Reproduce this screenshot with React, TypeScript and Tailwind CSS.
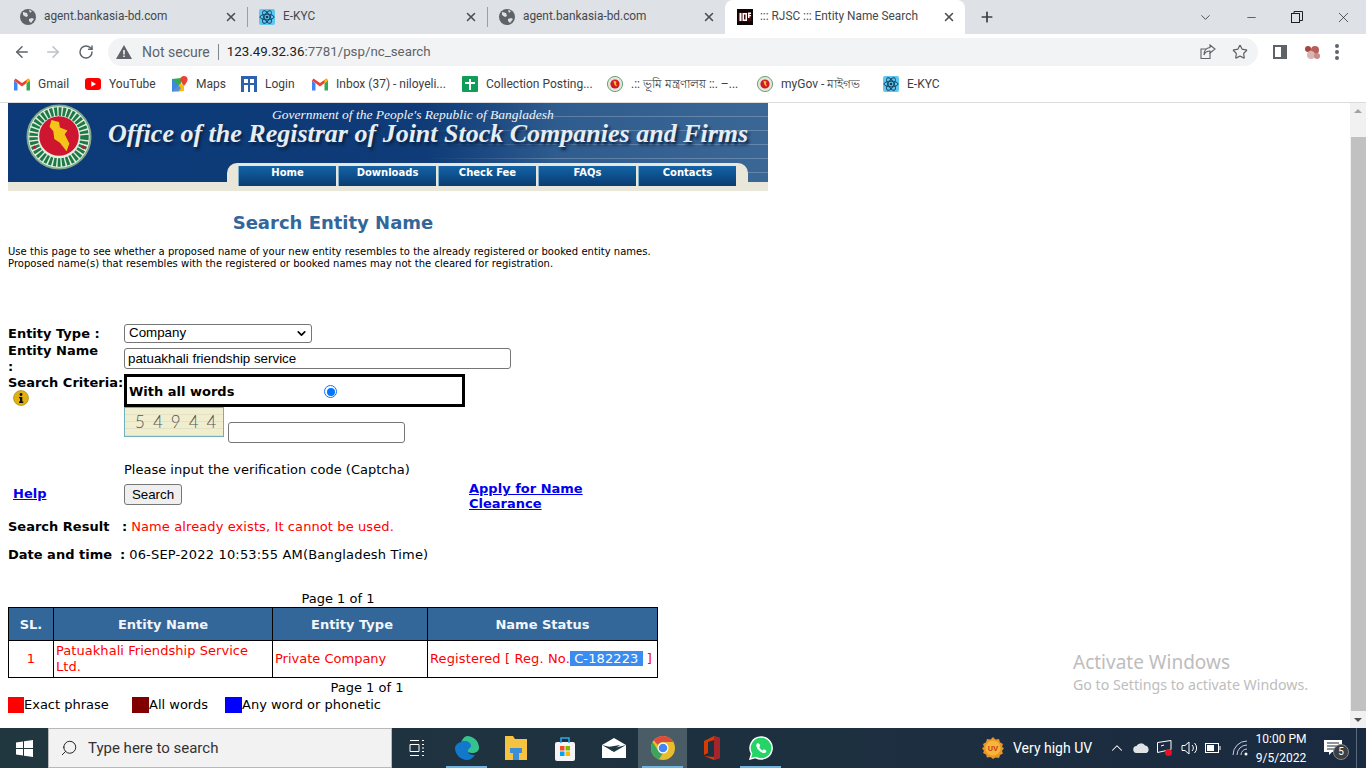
import React from "react";
import { ArrowLeft, ArrowRight, RotateCw, Star, X, Plus, ChevronDown, Minus, Search, ChevronUp } from "lucide-react";

const ui = { fontFamily: 'Roboto, "Noto Sans", sans-serif' };
const noto = { fontFamily: '"Noto Sans", "Open Sans", sans-serif' };
const verdana = { fontFamily: '"DejaVu Sans", Verdana, sans-serif' };
const arial = { fontFamily: '"Liberation Sans", Arial, sans-serif' };

function Globe() {
  return (
    <svg width="16" height="16" viewBox="0 0 16 16" className="shrink-0">
      <circle cx="8" cy="8" r="8" fill="#5f6368" />
      <path d="M3 3l4 1 1 3-2 1-3-2zM9 10l3-1 2 1-3 4-2-2zM9 1l3 1-2 2z" fill="#dee1e6" />
    </svg>
  );
}
function Atom({ s = 16 }: { s?: number }) {
  return (
    <svg width={s} height={s} viewBox="0 0 16 16" className="shrink-0">
      <rect width="16" height="16" rx="2" fill="#5cc8ee" />
      <g fill="none" stroke="#123a5c" strokeWidth="0.9">
        <ellipse cx="8" cy="8" rx="7" ry="2.8" />
        <ellipse cx="8" cy="8" rx="7" ry="2.8" transform="rotate(60 8 8)" />
        <ellipse cx="8" cy="8" rx="7" ry="2.8" transform="rotate(120 8 8)" />
      </g>
      <circle cx="8" cy="8" r="1.3" fill="#123a5c" />
    </svg>
  );
}
function Gmail() {
  return (
    <svg width="16" height="13" viewBox="0 0 16 12" className="shrink-0">
      <path d="M0 2v10h3.500V5z" fill="#4285f4" />
      <path d="M16 2v10h-3.500V5z" fill="#34a853" />
      <path d="M0 2l8 6 8-6-1.500-2L8 4.500 1.500 0z" fill="#ea4335" />
      <path d="M12.500 5V1.500L14.500 0 16 2z" fill="#fbbc04" />
    </svg>
  );
}
function Youtube() {
  return (
    <svg width="16" height="12" viewBox="0 0 16 12" className="shrink-0">
      <rect width="16" height="12" rx="3" fill="#f00" />
      <path d="M6.300 3.200v5.600L11 6z" fill="#fff" />
    </svg>
  );
}
function Maps() {
  return (
    <svg width="16" height="16" viewBox="0 0 16 16" className="shrink-0">
      <path d="M0 3l9-1v13l-9 1z" fill="#34a853" />
      <path d="M0 16L9 7l3 3v5z" fill="#fbbc04" />
      <path d="M0 3l9 9-2 3H0z" fill="#4285f4" opacity="0.85" />
      <path d="M12 0a3.600 3.600 0 0 1 3.600 3.600C15.600 6 12 10 12 10S8.400 6 8.400 3.600A3.600 3.600 0 0 1 12 0z" fill="#ea4335" />
    </svg>
  );
}
function GridIcon() {
  return (
    <svg width="16" height="16" viewBox="0 0 16 16" className="shrink-0">
      <rect width="16" height="16" fill="#2e62b0" />
      <path d="M3 3h4v4H3zM9 3h4v4H9zM3 9h4v7H3zM9 9h4v7H9z" fill="#fff" />
    </svg>
  );
}
function GreenCross() {
  return (
    <svg width="16" height="16" viewBox="0 0 16 16" className="shrink-0">
      <rect width="16" height="16" rx="1" fill="#0f9d58" />
      <path d="M7 3h2v3h4v2H9v6H7V8H3V6h4z" fill="#fff" />
    </svg>
  );
}
function Emblem({ s = 16 }: { s?: number }) {
  return (
    <svg width={s} height={s} viewBox="0 0 16 16" className="shrink-0">
      <circle cx="8" cy="8" r="7.600" fill="#dfe8d8" stroke="#4d8a5c" strokeWidth="0.8" />
      <circle cx="8" cy="8" r="4.600" fill="#d4152c" />
      <path d="M6.500 4.500l3 1-.5 2 1 3-2-1-1-2z" fill="#f6c21c" />
    </svg>
  );
}
function TenLogo() {
  return (
    <svg width="16" height="16" viewBox="0 0 16 16" className="shrink-0">
      <rect width="16" height="16" fill="#0a0505" />
      <rect x="1.500" y="3.500" width="13" height="9" fill="#7a1010" opacity="0.55" />
      <path d="M2.500 4h2v8h-2zM5.500 4h4.500v8H5.500zM7 5.500v5h1.500v-5zM11 3.500h3V5h-1.500v1H14v1.300h-1.500V9H11z" fill="#fff" />
    </svg>
  );
}

function Tab({ icon, title, active, cls }: { icon: React.ReactNode; title: string; active?: boolean; cls: string }) {
  return (
    <div className={`${cls} h-[34px] flex items-center pr-[9px] text-[11.850px] shrink-0 text-[#45494d] ${active ? "bg-white rounded-t-lg" : ""}`}>
      {icon}
      <span className={active ? "ml-[7px] flex-1 truncate" : "ml-[8px] flex-1 truncate"}>{title}</span>
      <X size={14} strokeWidth={2.6} className="text-[#4a4d51] shrink-0" />
    </div>
  );
}
const Sep = () => <div className="w-px h-[20px] bg-[#9aa0a6] shrink-0" />;

function Bookmark({ icon, label, w }: { icon: React.ReactNode; label: React.ReactNode; w: string }) {
  return (
    <div className={`${w} flex items-center gap-[8px] shrink-0 text-[12px] text-[#3c4043]`}>
      {icon}
      <span className="truncate">{label}</span>
    </div>
  );
}

function WinBtn({ children }: { children: React.ReactNode }) {
  return <div className="w-[46px] flex justify-center">{children}</div>;
}

function Chrome() {
  return (
    <div style={ui} className="shrink-0">
      <div className="h-[34px] bg-[#dee1e6] flex items-center pl-[5px]">
        <Tab cls="w-[242px] pl-[15px]" icon={<Globe />} title="agent.bankasia-bd.com" />
        <Sep />
        <Tab cls="w-[239px] pl-[11px]" icon={<Atom />} title="E-KYC" />
        <Sep />
        <Tab cls="w-[237px] pl-[11px]" icon={<Globe />} title="agent.bankasia-bd.com" />
        <Tab cls="w-[240px] pl-[12px]" active icon={<TenLogo />} title="::: RJSC ::: Entity Name Search" />
        <Plus size={16} strokeWidth={2.6} className="ml-[14px] text-[#3c4043]" />
        <div className="ml-auto flex items-center text-[#1f1f1f]">
          <WinBtn><ChevronDown size={15} strokeWidth={1.2} /></WinBtn>
          <WinBtn><Minus size={13} strokeWidth={1.2} /></WinBtn>
          <WinBtn>
            <svg width="12" height="12" viewBox="0 0 12 12" fill="none" stroke="#1f1f1f"><rect x="0.500" y="2.500" width="8" height="9" /><path d="M3 2.500V.5h8.500v9H8.500" /></svg>
          </WinBtn>
          <WinBtn><X size={17} strokeWidth={1} /></WinBtn>
        </div>
      </div>
      <div className="h-[34px] bg-white flex items-center pl-[13px] pt-[2px]">
        <ArrowLeft size={18} strokeWidth={2} className="text-[#5f6368]" />
        <ArrowRight size={18} strokeWidth={2} className="ml-[13px] text-[#bdc1c6]" />
        <RotateCw size={16} strokeWidth={2.2} className="ml-[16px] text-[#5f6368]" />
        <div className="ml-[14px] w-[1150px] h-[28px] rounded-full bg-[#f1f3f4] flex items-center pl-[8px] text-[14px] text-[#5f6368]">
          <svg width="16" height="14" viewBox="0 0 16 14" className="shrink-0"><path d="M8 0l8 14H0zM7.200 5v4.500h1.600V5zM7.200 10.500v1.600h1.600v-1.600z" fill="#5f6368" fillRule="evenodd" /></svg>
          <span className="ml-[10px]">Not secure</span>
          <div className="w-px h-[16px] bg-[#80868b] ml-[8px] mr-[8px]" />
          <span className="text-[13.300px]"><span className="text-[#202124]">123.49.32.36</span>:7781/psp/nc_search</span>
          <svg width="16" height="16" viewBox="0 0 16 16" className="ml-auto" fill="none" stroke="#5f6368" strokeWidth="1.100"><path d="M10 8.500V14.500H1V5h5" /><path d="M10 1l5 4-5 4V7C7 7 5 8 4 11c0-4 2-7 6-7.500z" /></svg>
          <Star size={16} strokeWidth={1.8} className="ml-[16px] mr-[10px] text-[#5f6368]" />
        </div>
        <svg width="14" height="14" viewBox="0 0 14 14" className="ml-[15px]"><path d="M0 0h14v14H0zM2 2v10h6V2z" fill="#5f6368" fillRule="evenodd" /></svg>
        <svg width="18" height="16" viewBox="0 0 18 16" className="ml-[16px]">
          <circle cx="5" cy="5" r="3" fill="#a94442" /><circle cx="12" cy="6" r="4" fill="#b85c5c" /><circle cx="8" cy="11" r="4" fill="#d7b5b2" /><circle cx="14" cy="12" r="3" fill="#c58c88" />
        </svg>
        <div className="ml-[14px] w-[4px] flex flex-col gap-[2.500px]">
          <span className="w-[3.500px] h-[3.500px] rounded-full bg-[#5f6368]" />
          <span className="w-[3.500px] h-[3.500px] rounded-full bg-[#5f6368]" />
          <span className="w-[3.500px] h-[3.500px] rounded-full bg-[#5f6368]" />
        </div>
      </div>
      <div className="h-[35px] bg-white border-b border-[#dadce0] flex items-center pl-[14px] pb-[2px]">
        <Bookmark w="w-[71px]" icon={<Gmail />} label="Gmail" />
        <Bookmark w="w-[87px]" icon={<Youtube />} label="YouTube" />
        <Bookmark w="w-[69px]" icon={<Maps />} label="Maps" />
        <Bookmark w="w-[71px]" icon={<GridIcon />} label="Login" />
        <Bookmark w="w-[150px]" icon={<Gmail />} label="Inbox (37) - niloyeli..." />
        <Bookmark w="w-[145px]" icon={<GreenCross />} label="Collection Posting..." />
        <Bookmark w="w-[150px]" icon={<Emblem />} label=".:: ভূমি মন্ত্রণালয় ::. –..." />
        <Bookmark w="w-[126px]" icon={<Emblem />} label="myGov - মাইগভ" />
        <Bookmark w="w-[80px]" icon={<Atom />} label="E-KYC" />
      </div>
    </div>
  );
}

function Banner() {
  const nav = ["Home", "Downloads", "Check Fee", "FAQs", "Contacts"];
  return (
    <div className="w-[760px] h-[88px] bg-[#e9e7da] shrink-0">
      <div className="h-[79px] flex overflow-hidden bg-[linear-gradient(90deg,#0c3a78_0%,#0f3c78_55%,rgba(15,60,120,0)_72%),repeating-linear-gradient(180deg,rgba(255,255,255,0)_0px,rgba(255,255,255,0)_13px,rgba(255,255,255,0.22)_13px,rgba(255,255,255,0.22)_14px),linear-gradient(90deg,#12407c,#3a6795)]">
        <svg width="66" height="66" viewBox="0 0 70 70" className="ml-[18px] mt-[1px] shrink-0">
          <circle cx="35" cy="35" r="33.500" fill="#e4eee0" stroke="#7fa98a" strokeWidth="2" />
          <circle cx="35" cy="35" r="27" fill="none" stroke="#1d7a46" strokeWidth="9" strokeDasharray="3 1.500" />
          <circle cx="35" cy="34" r="21" fill="#cf1630" />
          <path d="M27 17l8 2 1 6 8 3-3 4 5 10-3 8-7-9-6-4-1-8-4-5z" fill="#f4c518" />
          <path d="M9 44l3 2-3 2-3-2zM61 44l3 2-3 2-3-2z" fill="#b32036" />
        </svg>
        <div className="flex flex-col" style={{ fontFamily: '"Liberation Serif", "Times New Roman", serif' }}>
          <div className="ml-[180px] mt-[4px] text-[13.500px] italic leading-[16px] text-[#eef3f8] whitespace-nowrap">Government of the People's Republic of Bangladesh</div>
          <div className="ml-[16px] text-[26px] italic font-bold leading-[22px] text-[#e6edf3] whitespace-nowrap [text-shadow:2px_3px_3px_#0a2245]">Office of the Registrar of Joint Stock Companies and Firms</div>
        </div>
      </div>
      <div className="ml-[219px] -mt-[19px] w-[521px] h-[28px] bg-[#e9e7da] rounded-t-[10px] flex pl-[11px] pt-[3px] gap-[2px] relative">
        {nav.map((n) => (
          <div key={n} style={verdana} className="w-[98px] h-[20px] bg-gradient-to-b from-[#1264a8] to-[#0a3c70] border-l border-[#7fb0d0] text-white text-[10px] font-bold text-center leading-[13px]">{n}</div>
        ))}
      </div>
    </div>
  );
}

function Captcha() {
  return (
    <div className="w-[100px] h-[30px] border border-[#6fb0bd] bg-[repeating-linear-gradient(180deg,#f0eecf_0px,#f0eecf_6px,#d5d5b8_7px)] flex items-center pl-[10px] gap-[8px] text-[#555] text-[17px] font-light shrink-0" style={{ fontFamily: 'Lato, sans-serif' }}>
      <span>5</span><span>4</span><span>9</span><span>4</span><span>4</span>
    </div>
  );
}

function Form() {
  return (
    <div className="text-[13px] text-black" style={verdana}>
      <div className="flex h-[22px] items-center">
        <div className="w-[116px] font-bold pt-[2px]">Entity Type :</div>
        <div className="w-[188px] h-[19px] border border-[#767676] rounded-[3px] bg-white flex items-center pl-[4px] pr-[3px] justify-between text-[13.330px]" style={arial}>
          <span>Company</span>
          <ChevronDown size={13} strokeWidth={3} />
        </div>
      </div>
      <div className="flex h-[30px]">
        <div className="w-[116px] font-bold leading-[16px] -mt-[1px]">Entity Name<br />:</div>
        <div className="w-[387px] h-[21px] mt-[4px] border border-[#767676] rounded-[3px] bg-white flex items-center pl-[3px] text-[13.330px]" style={arial}>patuakhali friendship service</div>
      </div>
      <div className="flex h-[33px]">
        <div className="w-[116px] font-bold leading-[16px] whitespace-nowrap pt-[1px]">
          Search Criteria:
          <svg width="16" height="16" viewBox="0 0 16 16" className="ml-[5px] -mt-[1px]">
            <circle cx="8" cy="8" r="7.500" fill="#e0b010" stroke="#9a7a00" strokeWidth="0.600" />
            <circle cx="8" cy="4.500" r="1.400" fill="#111" />
            <path d="M6 7h3.300v4.500h1V13H6v-1.500h1V8.300H6z" fill="#111" />
          </svg>
        </div>
        <div className="w-[341px] h-[33px] border-[3px] border-black flex items-center pl-[2px] font-bold">
          <span className="w-[195px] pt-[2px]">With all words</span>
          <span className="w-[13px] h-[13px] mt-[2px] rounded-full border border-[#0075ff] flex items-center justify-center bg-white">
            <span className="w-[8px] h-[8px] rounded-full bg-[#0075ff]" />
          </span>
        </div>
      </div>
      <div className="flex ml-[116px] h-[36px] gap-[4px]">
        <Captcha />
        <div className="w-[177px] h-[21px] mt-[15px] border border-[#767676] rounded-[3px] bg-white" />
      </div>
      <div className="ml-[116px] mt-[18px] leading-[18px]">Please input the verification code (Captcha)</div>
      <div className="flex h-[22px] mt-[5px]">
        <a className="ml-[5px] w-[111px] font-bold text-[#0000ee] underline leading-[20px]">Help</a>
        <div className="w-[58px] h-[21px] border border-[#767676] rounded-[3px] bg-[#efefef] flex items-center justify-center text-[13.330px]" style={arial}>Search</div>
        <a className="ml-[287px] w-[130px] font-bold text-[#0000ee] underline leading-[15px] mt-[-3px]">Apply for Name Clearance</a>
      </div>
      <div className="flex items-center h-[18px] mt-[11px] pt-[2px]">
        <div className="w-[114px] font-bold whitespace-nowrap">Search Result</div>
        <span className="font-bold mr-[4px]">:</span>
        <span className="text-[#f00] tracking-[0.100px]">Name already exists, It cannot be used.</span>
      </div>
      <div className="flex items-center h-[18px] mt-[10px] pt-[2px]">
        <div className="w-[112px] font-bold whitespace-nowrap">Date and time</div>
        <span className="font-bold mr-[4px]">:</span>
        <span className="tracking-[0.175px]">06-SEP-2022 10:53:55 AM(Bangladesh Time)</span>
      </div>
    </div>
  );
}

function ResultTable() {
  return (
    <div style={verdana} className="w-[650px] text-[13px]">
      <div className="text-center leading-[16px] ml-[10px] mt-[28px]">Page 1 of 1</div>
      <table className="w-[650px] border-collapse table-fixed">
        <thead>
          <tr className="h-[33px] bg-[#336699] text-[#f2f6fa] font-bold">
            <th className="w-[45px] border border-black pt-[2px]">SL.</th>
            <th className="w-[219px] border border-black pt-[2px]">Entity Name</th>
            <th className="w-[155px] border border-black pl-[4px] pt-[2px]">Entity Type</th>
            <th className="border border-black pt-[2px]">Name Status</th>
          </tr>
        </thead>
        <tbody>
          <tr className="h-[37px] text-[#f00] leading-[16px]">
            <td className="border border-black text-center">1</td>
            <td className="border border-black pl-[2px] tracking-[0.050px]">Patuakhali Friendship Service Ltd.</td>
            <td className="border border-black pl-[2px]">Private Company</td>
            <td className="border border-black pl-[2px] whitespace-nowrap tracking-[0.120px]">Registered [ Reg. No.<span className="bg-[#3b8cf0] text-white">&nbsp;C-182223&nbsp;</span><span className="ml-[4px]">]</span></td>
          </tr>
        </tbody>
      </table>
      <div className="text-center leading-[16px] ml-[68px] mt-[2px]">Page 1 of 1</div>
      <div className="flex items-center h-[17px]">
        <span className="w-[16px] h-[16px] bg-[#f00]" />
        <span className="w-[108px]">Exact phrase</span>
        <span className="w-[17px] h-[16px] bg-[#800000]" />
        <span className="w-[76px]">All words</span>
        <span className="w-[17px] h-[16px] bg-[#0000ff]" />
        <span>Any word or phonetic</span>
      </div>
    </div>
  );
}

function Scrollbar() {
  return (
    <div className="w-[16px] bg-[#f1f1f1] flex flex-col items-center shrink-0">
      <div className="h-[17px] flex items-center justify-center">
        <span className="border-x-[4px] border-x-transparent border-b-[4px] border-b-[#a3a3a3]" />
      </div>
      <div className="w-[15px] mt-[17px] h-[575px] bg-[#c1c1c1]" />
      <div className="mt-auto h-[17px] flex items-center justify-center">
        <span className="border-x-[4px] border-x-transparent border-t-[4px] border-t-[#505050]" />
      </div>
    </div>
  );
}

function Page() {
  return (
    <div className="h-[625px] flex bg-white relative shrink-0">
      <div className="flex-1 pl-[8px] overflow-hidden">
        <Banner />
        <h1 style={verdana} className="w-[650px] text-center text-[18px] font-bold text-[#336699] mt-[20px] leading-[23px]">Search Entity Name</h1>
        <p style={verdana} className="text-[10px] leading-[12px] mt-[12px] h-[76px] text-black w-[660px] tracking-[0.030px]">
          Use this page to see whether a proposed name of your new entity resembles to the already registered or booked entity names.<br />
          Proposed name(s) that resembles with the registered or booked names may not the cleared for registration.
        </p>
        <Form />
        <ResultTable />
      </div>
      <Scrollbar />
      <div className="absolute left-[1073px] top-[547px] text-[#bdbdbd]" style={noto}>
        <div className="text-[19px] leading-[24px]">Activate Windows</div>
        <div className="text-[14.200px] leading-[20px] pt-[1px]">Go to Settings to activate Windows.</div>
      </div>
    </div>
  );
}

function TaskIcon({ children, active, underline }: { children: React.ReactNode; active?: boolean; underline?: boolean }) {
  return (
    <div className={`w-[49px] h-[40px] flex items-center justify-center relative shrink-0 ${active ? "bg-[#4a5c66]" : ""}`}>
      {children}
      {underline && <span className="absolute bottom-0 left-[4px] right-[4px] h-[2px] bg-[#6fb3e0]" />}
    </div>
  );
}
function TrayBox({ children }: { children: React.ReactNode }) {
  return <div className="w-[24px] flex justify-center shrink-0">{children}</div>;
}

function Taskbar() {
  return (
    <div style={ui} className="h-[40px] flex-1 flex items-center bg-gradient-to-r from-[#21373f] to-[#1a2a40] text-white">
      <div className="w-[48px] flex justify-center shrink-0">
        <svg width="17" height="17" viewBox="0 0 17 17" fill="#fff"><path d="M0 2.400l7-1v6.600H0zM8 1.300L17 0v8H8zM0 9h7v6.600l-7-1zM8 9h9v8l-9-1.300z" /></svg>
      </div>
      <div className="w-[344px] h-[40px] bg-[#f2f2f2] border border-[#b8b8b8] flex items-center pl-[11px] text-[#333] text-[15px] shrink-0">
        <Search size={18} strokeWidth={1.3} className="-scale-x-100 text-[#222]" />
        <span className="ml-[10px] pt-[1px]">Type here to search</span>
      </div>
      <div className="w-[50px] flex justify-center shrink-0">
        <svg width="16" height="16" viewBox="0 0 16 16" fill="none" stroke="#fff"><path d="M1 .5h9M1 15.500h9M1 4.500h9v7H1zM13 .5h2M13 4.500h2M13 8h2M13 11.500h2M13 15.500h2" /></svg>
      </div>
      <TaskIcon underline>
        <svg width="26" height="26" viewBox="0 0 26 26">
          <path d="M13 1a12 12 0 0 1 12 12c0 3-3 5-7 5-3 0-5-1-5-3s3-2 3-5c0-3-5-5-9-3C9 3 11 1 13 1z" fill="#35c28f" />
          <path d="M7 7c3-2 10-1 10 4 0 2-3 2-3 5s3 4 7 4c-2 3-5 5-8 5C7 25 1 20 1 13c0-2 2-5 6-6z" fill="#1178cc" />
        </svg>
      </TaskIcon>
      <TaskIcon>
        <svg width="22" height="26" viewBox="0 0 22 26"><path d="M0 1h8l2 3h12v21H0z" fill="#f5c242" /><path d="M8 16h6v9H8z" fill="#3a8fd8" /><path d="M5 13h12v5H5z" fill="#3a8fd8" /></svg>
      </TaskIcon>
      <TaskIcon>
        <svg width="24" height="25" viewBox="0 0 24 25"><rect x="2" y="6" width="20" height="19" rx="2" fill="#f4f4f4" /><path d="M8 7V2h8v5" fill="none" stroke="#2ea8e8" strokeWidth="1.500" /><path d="M7 10h4.500v4.500H7z" fill="#f25022" /><path d="M12.500 10H17v4.500h-4.500z" fill="#7fba00" /><path d="M7 15.500h4.500V20H7z" fill="#00a4ef" /><path d="M12.500 15.500H17V20h-4.500z" fill="#ffb900" /></svg>
      </TaskIcon>
      <TaskIcon>
        <svg width="24" height="20" viewBox="0 0 24 20"><path d="M0 7L12 0l12 7v13H0z" fill="#fff" /><path d="M0 7l12 7 12-7-12 3z" fill="#21373f" /><path d="M6 9l12-2-8 6z" fill="#21373f" /></svg>
      </TaskIcon>
      <TaskIcon active underline>
        <svg width="24" height="24" viewBox="0 0 24 24">
          <circle cx="12" cy="12" r="12" fill="#e8bc2f" />
          <path d="M12 0a12 12 0 0 1 10.400 6H12a6 6 0 0 0-5.200 3L2.800 4.500A12 12 0 0 1 12 0z" fill="#dd4b3e" />
          <path d="M1.600 6A12 12 0 0 0 8 23.300l4-6.300a6 6 0 0 1-5.200-3z" fill="#3ba55c" />
          <circle cx="12" cy="12" r="5.500" fill="#fff" /><circle cx="12" cy="12" r="4.300" fill="#4285f4" />
        </svg>
      </TaskIcon>
      <TaskIcon>
        <svg width="18" height="24" viewBox="0 0 18 24"><path d="M1 5l10-5 6 2v20l-6 2-10-4 10 1V4L5 6v11l-4 2z" fill="#d83b01" /><path d="M11 0l6 2v20l-6 2z" fill="#a4262c" /></svg>
      </TaskIcon>
      <TaskIcon underline>
        <svg width="24" height="24" viewBox="0 0 24 24"><path d="M12 1a11 11 0 0 0-9.400 16.600L1 23l5.600-1.500A11 11 0 1 0 12 1z" fill="#25d366" stroke="#fff" strokeWidth="1.500" /><path d="M8.500 7c-1 .8-1.500 2-1 3.500 1 3 3.500 5.500 6.500 6.500 1.500.3 2.800-.3 3.300-1.300l-.3-1.500-2.300-1-1 1.200c-1.500-.6-2.800-2-3.500-3.500l1-1L10.500 8z" fill="#fff" /></svg>
      </TaskIcon>
      <div className="ml-auto flex items-center">
        <svg width="22" height="22" viewBox="0 0 22 22" className="shrink-0">
          <path d="M11 0l2.500 2.500L17 2l1 3.200L21 7l-1 3 2 1-2 3 1 2.500-3 1.500-1 3-3.500-.5L11 22l-2.500-2-3.500.5-1-3-3-1.500L2 14l-2-3 2-1-1-3 3-1.800L5 2l3.500.5z" fill="#e8952a" />
          <circle cx="11" cy="11" r="7.500" fill="#f7b53a" />
          <text x="11" y="14" textAnchor="middle" fontSize="8" fontWeight="700" fill="#c9471d" fontFamily="Roboto, sans-serif">UV</text>
        </svg>
        <span className="ml-[9px] w-[80px] text-[14px] whitespace-nowrap pt-[1px]">Very high UV</span>
        <div className="w-[12px]" />
        <TrayBox><ChevronUp size={18} strokeWidth={1.4} /></TrayBox>
        <TrayBox>
          <svg width="17" height="10" viewBox="0 0 17 10"><path d="M4 10a3.500 3.500 0 0 1-.5-7A5 5 0 0 1 12 2.500 4 4 0 0 1 13.500 10z" fill="#dfe3e6" /></svg>
        </TrayBox>
        <TrayBox>
          <svg width="18" height="18" viewBox="0 0 18 18" fill="none" stroke="#fff"><path d="M1.500 3.500L15 1.500v9l-13.500 3zM5 7l3-1" /><circle cx="12.500" cy="13.500" r="3.500" fill="#e81123" stroke="none" /></svg>
        </TrayBox>
        <TrayBox>
          <svg width="17" height="16" viewBox="0 0 17 16" fill="none" stroke="#fff" strokeWidth="1"><path d="M1 5.500h3L8 2v12l-4-3.500H1zM11 5a4 4 0 0 1 0 6M13.500 3a7 7 0 0 1 0 10" /></svg>
        </TrayBox>
        <TrayBox>
          <svg width="16" height="10" viewBox="0 0 16 10" fill="none" stroke="#fff"><rect x="0.500" y="0.500" width="13" height="9" /><rect x="2" y="2" width="7" height="6" fill="#fff" stroke="none" /><path d="M15 3v4" /></svg>
        </TrayBox>
        <div className="w-[3px]" />
        <TrayBox>
          <svg width="16" height="16" viewBox="0 0 16 16" fill="none" stroke="#ccd" strokeWidth="1"><path d="M1 15A14 14 0 0 1 15 1M5 15A10 10 0 0 1 15 5M9 15a6 6 0 0 1 6-6" /><circle cx="14" cy="14" r="1.500" fill="#fff" stroke="none" /></svg>
        </TrayBox>
        <div className="w-[58px] text-center text-[12px] leading-[19px] whitespace-nowrap pt-[1px]">
          <div>10:00 PM</div>
          <div>9/5/2022</div>
        </div>
        <div className="w-[46px] flex justify-center relative">
          <svg width="18" height="16" viewBox="0 0 18 16"><path d="M0 0h18v12H8l-3 3v-3H0z" fill="#fff" /><path d="M3 3h12M3 6h12M3 9h8" stroke="#1a2a40" /></svg>
          <span className="absolute left-[23px] top-[4px] w-[16px] h-[16px] rounded-full bg-[#3a3f44] border border-[#888] text-[10px] leading-[14px] text-center">5</span>
        </div>
        <div className="w-[10px] h-[40px] border-l border-[#5a6a78]" />
      </div>
    </div>
  );
}

export default function App() {
  return (
    <div className="w-[1366px] h-[768px] overflow-hidden flex flex-col bg-white">
      <Chrome />
      <Page />
      <Taskbar />
    </div>
  );
}
